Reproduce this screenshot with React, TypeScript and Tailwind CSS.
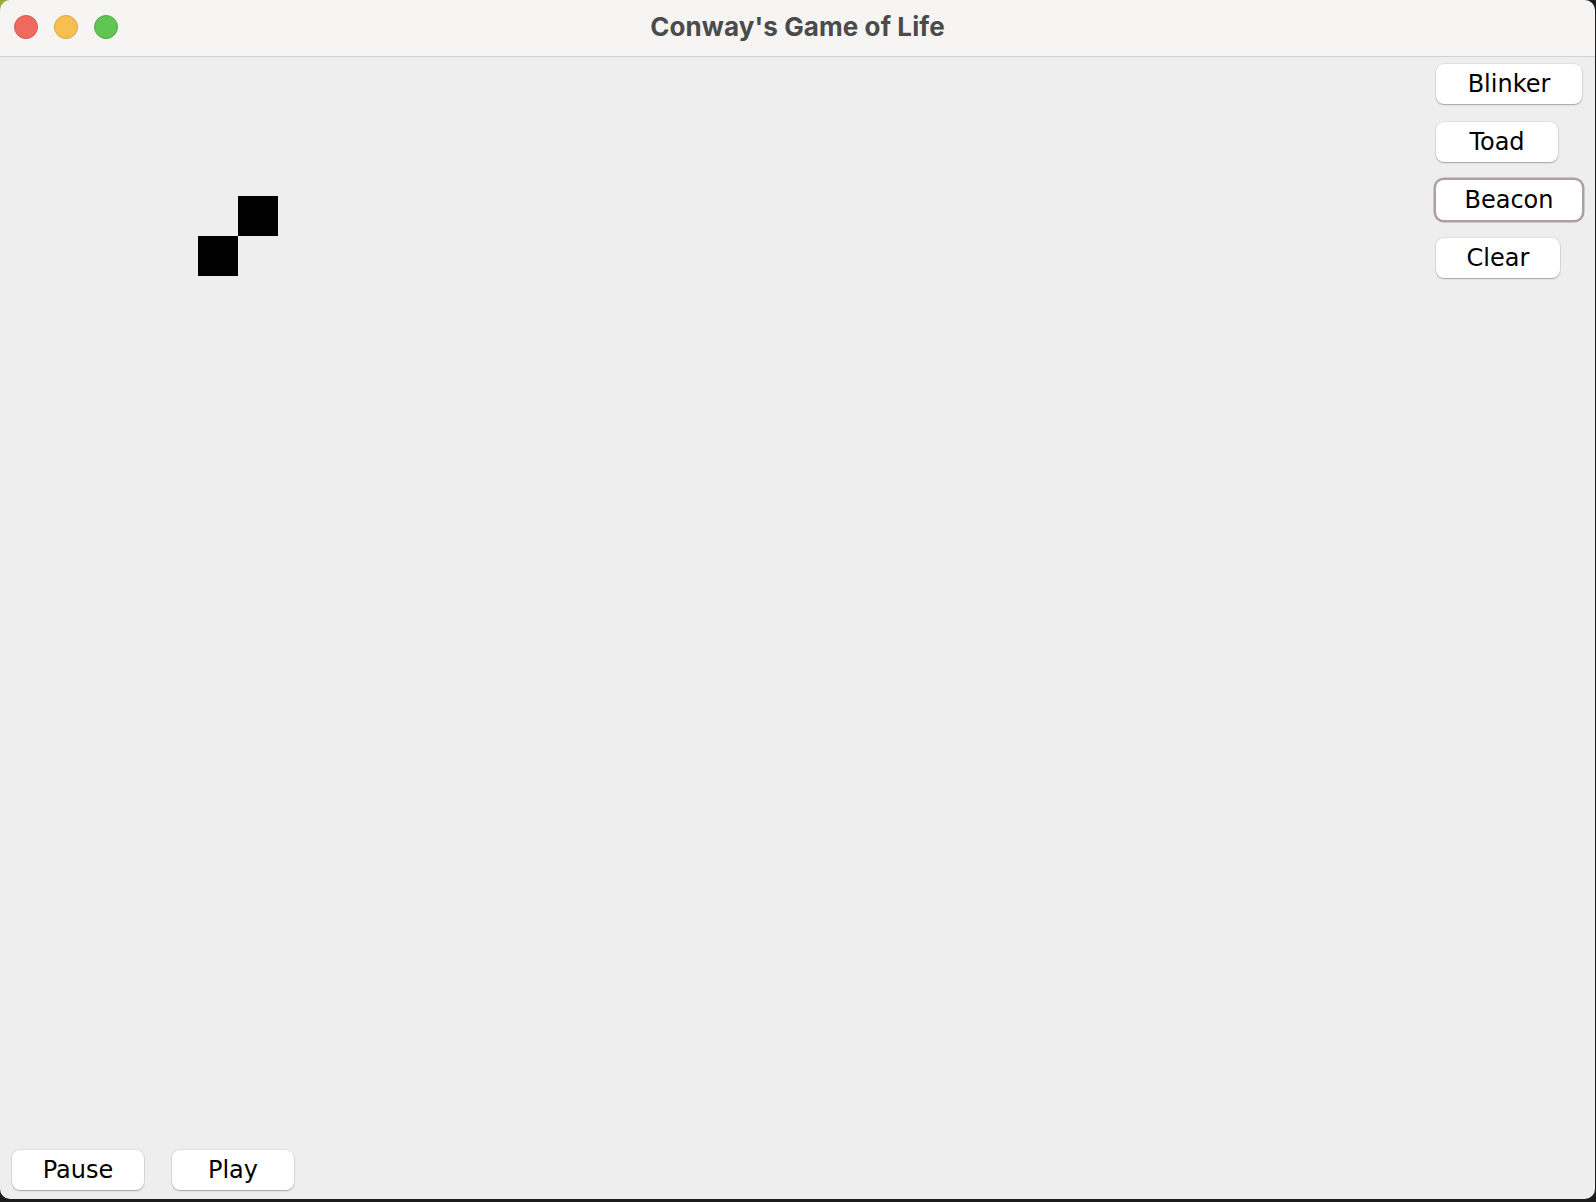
import React, { useState } from "react";

type Cell = { x: number; y: number };

const CELL = 40;

const PatternButton: React.FC<{
  label: string;
  width: string;
  focused?: boolean;
  onClick?: () => void;
}> = ({ label, width, focused, onClick }) => (
  <button
    onClick={onClick}
    className={`${width} h-[40px] rounded-[8px] bg-white text-[24px] leading-none text-black font-['DejaVu_Sans',sans-serif] flex items-center justify-center shadow-[0_0_0_0.5px_rgba(0,0,0,0.1),0_1px_1.5px_rgba(0,0,0,0.28)] ${
      focused ? "ring-[2.5px] ring-[#ad9fa8]" : ""
    }`}
  >
    {label}
  </button>
);

const App: React.FC = () => {
  const [cells, setCells] = useState<Cell[]>([
    { x: 238, y: 139 },
    { x: 198, y: 179 },
  ]);

  return (
    <div className="w-[1596px] h-[1202px] bg-[#1c1c1c] bg-[radial-gradient(circle_at_0_0,#8fae3c_0,#8fae3c_13px,#1c1c1c_15px)] overflow-hidden">
      <div className="w-[1595px] h-[1199px] rounded-[10px] overflow-hidden flex flex-col">
        {/* title bar */}
        <div className="h-[57px] shrink-0 bg-[#f6f5f3] border-b border-[#d2d2d2] relative flex items-center justify-center">
          <div className="absolute left-[14px] top-[15px] flex gap-[16px]">
            <div className="w-[24px] h-[24px] rounded-full bg-[#ee6a5f] border border-[#d65a50]" />
            <div className="w-[24px] h-[24px] rounded-full bg-[#f6bf50] border border-[#dda53f]" />
            <div className="w-[24px] h-[24px] rounded-full bg-[#61c554] border border-[#4fac43]" />
          </div>
          <span className="font-['Inter',sans-serif] font-bold text-[26px] text-[#4b4b4b] tracking-[0.1px] -mt-[3px]">
            Conway's Game of Life
          </span>
        </div>

        {/* content */}
        <div className="flex-1 bg-[#eeeeee] flex flex-col">
          <div className="flex-1 flex">
            <div className="flex-1 relative">
              {cells.map((c, i) => (
                <div
                  key={i}
                  className="absolute bg-black"
                  style={{ left: c.x, top: c.y, width: CELL, height: CELL }}
                />
              ))}
            </div>
            <div className="w-[159px] pt-[7px] flex flex-col items-start gap-[18px]">
              <PatternButton label="Blinker" width="w-[146px]" />
              <PatternButton label="Toad" width="w-[122px]" />
              <PatternButton label="Beacon" width="w-[146px]" focused />
              <PatternButton label="Clear" width="w-[124px]" onClick={() => setCells([])} />
            </div>
          </div>
          <div className="flex gap-[28px] pl-[12px] pb-[9px]">
            <PatternButton label="Pause" width="w-[132px]" />
            <PatternButton label="Play" width="w-[122px]" />
          </div>
        </div>
      </div>
    </div>
  );
};

export default App;
